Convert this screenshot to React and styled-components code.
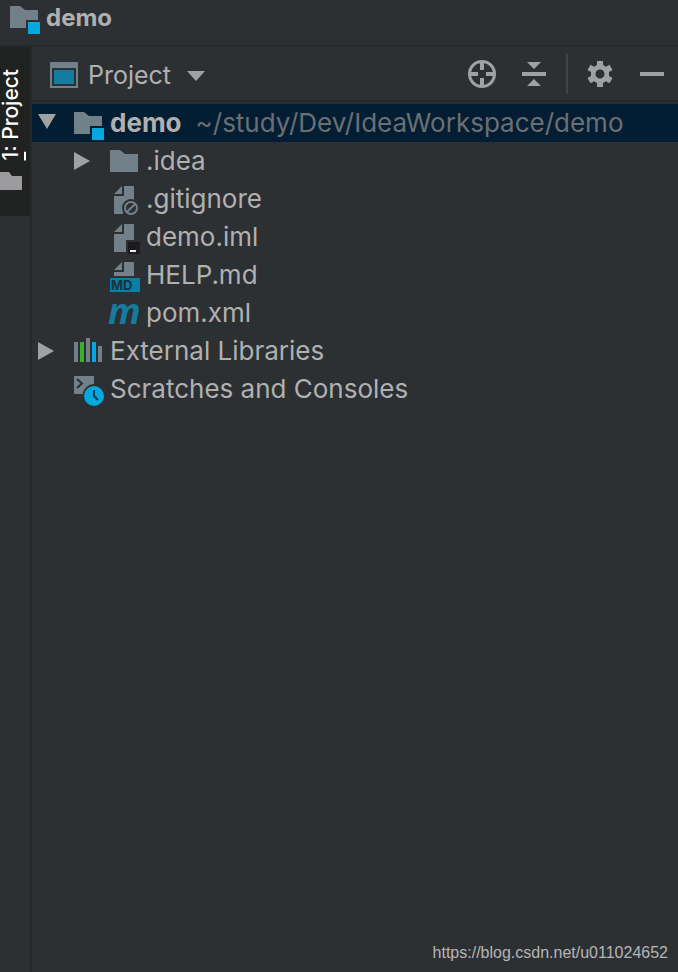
import React, { useState } from 'react';
import styled, { createGlobalStyle, ThemeProvider } from 'styled-components';

const theme = {
  background: '#2d3033',
  line: '#272828',
  selected: '#031e33',
  text: '#b0b0b1',
  muted: '#6b6f73',
  icon: '#718089',
  control: '#9fa1a3',
  blue: '#04a7de',
  teal: '#147c9f',
  green: '#3bb02a'
};

const GlobalStyle = createGlobalStyle`
  *, *::before, *::after {
    box-sizing: border-box;
  }

  body {
    margin: 0;
    background-color: ${theme.background};
  }
`;

const StyledWrapper = styled.div`
  min-height: 100vh;
  display: flex;
  flex-direction: column;
  position: relative;
  background-color: ${({ theme }) => theme.background};
  color: ${({ theme }) => theme.text};
  font-family: 'Inter', sans-serif;
  font-size: 26px;
  line-height: 32px;
`;

const StyledNavBar = styled.header`
  height: 47px;
  display: flex;
  align-items: flex-start;
  gap: 6px;
  padding: 2px 8px;
  border-bottom: 2px solid ${({ theme }) => theme.line};
  font-size: 24px;
  font-weight: 700;
`;

const StyledMain = styled.div`
  flex: 1;
  display: flex;
`;

const StyledStripe = styled.nav`
  width: 32px;
  border-right: 2px solid ${({ theme }) => theme.line};
`;

const StyledStripeButton = styled.button`
  width: 100%;
  height: 169px;
  display: flex;
  flex-direction: column;
  align-items: flex-start;
  justify-content: flex-end;
  gap: 12px;
  padding: 0 0 26px;
  border: none;
  background-color: #202121;
  color: #fff;
  font-family: inherit;
  font-size: 21px;
  font-weight: 500;
  line-height: 22px;
  cursor: pointer;
`;

const StyledStripeLabel = styled.span`
  writing-mode: vertical-rl;
  transform: rotate(180deg);
  white-space: nowrap;

  u {
    text-underline-offset: 2px;
    text-decoration-thickness: 2px;
  }
`;

const StyledPanel = styled.section`
  flex: 1;
  min-width: 0;
`;

const StyledToolbar = styled.div`
  height: 55px;
  display: flex;
  align-items: center;
  padding: 0 10px 0 16px;
  border-bottom: 2px solid ${({ theme }) => theme.line};
`;

const StyledViewButton = styled.button`
  display: flex;
  align-items: flex-end;
  gap: 8px;
  margin-right: auto;
  padding: 0;
  border: none;
  background: none;
  color: inherit;
  font: inherit;
  font-size: 25px;
  line-height: 30px;
  cursor: pointer;
`;

const StyledActions = styled.div`
  display: flex;
  align-items: center;
  gap: 20px;
`;

const StyledActionGroup = styled(StyledActions)`
  margin-left: 16px;
  padding-left: 16px;
  height: 40px;
  border-left: 2px solid #414446;
`;

const StyledIconButton = styled.button`
  width: ${({ $wide }) => ($wide ? '36px' : '32px')};
  height: 32px;
  flex-shrink: 0;
  padding: 0;
  border: none;
  background: none;
  cursor: pointer;
`;

const StyledIcon = styled.svg`
  width: 32px;
  height: 32px;
  display: block;
  flex-shrink: 0;
  overflow: visible;
`;

const StyledTree = styled.ul`
  margin: 0;
  padding: 2px 0 0;
  list-style: none;
`;

const StyledRow = styled.li`
  height: 38px;
  display: flex;
  align-items: flex-start;
  padding: 4px 0 0 ${({ $level }) => 4 + $level * 36}px;
  background-color: ${({ theme, $selected }) => ($selected ? theme.selected : 'transparent')};
  white-space: nowrap;
  cursor: default;
`;

const StyledArrowSlot = styled.span`
  width: 36px;
  flex-shrink: 0;
`;

const StyledName = styled.span`
  margin-left: 6px;
  line-height: 30px;
  font-weight: ${({ $bold }) => ($bold ? 700 : 400)};
`;

const StyledPath = styled.span`
  margin-left: 14px;
  line-height: 30px;
  color: ${({ theme }) => theme.muted};
`;

const StyledLink = styled.a`
  position: absolute;
  right: 10px;
  bottom: 8px;
  color: #b4b6b7;
  font-family: 'Liberation Sans', sans-serif;
  font-size: 16px;
  line-height: 22px;
  text-decoration: none;
`;

const Icon = ({ children }) => (
  <StyledIcon viewBox="0 0 32 32" aria-hidden="true">
    {children}
  </StyledIcon>
);

const FolderIcon = () => (
  <Icon>
    <path d="M2 4h10l5 4h13v18H2z" fill={theme.icon} />
  </Icon>
);

const ModuleIcon = () => (
  <Icon>
    <path d="M2 4h10l5 4h13v10H18v8H2z" fill={theme.icon} />
    <path d="M20 20h12v12H20z" fill={theme.blue} />
  </Icon>
);

const IgnoreIcon = () => (
  <Icon>
    <path d="M14 2v8H6z" fill={theme.icon} />
    <path d="M16 2h10v13.500a9 9 0 0 0-11 12.500v2H6V12h10z" fill={theme.icon} />
    <circle cx="23" cy="24" r="6" fill="none" stroke={theme.icon} strokeWidth="2" />
    <path d="M19 28l8-8" stroke={theme.icon} strokeWidth="2" />
  </Icon>
);

const ImlIcon = () => (
  <Icon>
    <path d="M14 2v8H6z" fill={theme.icon} />
    <path d="M16 2h10v16h-8v12H6V12h10z" fill={theme.icon} />
    <path d="M20 20h12v12H20z" fill="#1c1b1d" />
    <path d="M22 28h6v2h-6z" fill="#e8e8e8" />
  </Icon>
);

const MarkdownIcon = () => (
  <Icon>
    <path d="M14 2v8H6z" fill={theme.icon} />
    <path d="M16 2h10v14H6v-4h10z" fill={theme.icon} />
    <path d="M2 18h30v14H2z" fill="#087fa5" />
    <text x="3" y="30" fill="#19323d" fontFamily="Inter, sans-serif" fontSize="13" fontWeight="700">
      MD
    </text>
  </Icon>
);

const MavenIcon = () => (
  <Icon>
    <text
      x="0"
      y="26"
      fill={theme.teal}
      fontFamily="Open Sans, sans-serif"
      fontSize="36"
      fontWeight="700"
      fontStyle="italic"
    >
      m
    </text>
  </Icon>
);

const LibrariesIcon = () => (
  <Icon>
    <path d="M2 6h4v20H2zM14 2h4v24h-4zM26 10h4v16h-4z" fill={theme.icon} />
    <path d="M8 6h4v20H8z" fill={theme.green} />
    <path d="M20 6h4v20h-4z" fill={theme.blue} />
  </Icon>
);

const ScratchesIcon = () => (
  <Icon>
    <path d="M2 2h20v8a12 12 0 0 0-11.500 10H2z" fill={theme.icon} />
    <path d="M5 5l5 4.500-5 4.500" fill="none" stroke={theme.background} strokeWidth="2" />
    <circle cx="22" cy="22" r="10" fill={theme.blue} />
    <path d="M22 16v6l4 4" fill="none" stroke="#17384a" strokeWidth="2" />
  </Icon>
);

const ViewIcon = () => (
  <Icon>
    <path d="M2 4h28v26H2zM4 10v18h24V10z" fill={theme.icon} fillRule="evenodd" />
    <path d="M6 12h20v14H6z" fill={theme.teal} />
  </Icon>
);

const DropdownIcon = () => (
  <Icon>
    <path d="M8 13h18l-9 10z" fill={theme.control} />
  </Icon>
);

const LocateIcon = () => (
  <Icon>
    <circle cx="16" cy="16" r="12.5" fill="none" stroke={theme.control} strokeWidth="3" />
    <path d="M16 3v9M16 20v9M3 16h9M20 16h9" stroke={theme.control} strokeWidth="4" />
  </Icon>
);

const CollapseIcon = () => (
  <Icon>
    <path d="M9 4h14l-7 7zM4 14h24v4H4zM9 28h14l-7-7z" fill={theme.control} />
  </Icon>
);

const GearIcon = () => (
  <Icon>
    <path
      d="M13 3h6v4l3 1.700 3.500-2 3 5.200-3.500 2v4.200l3.500 2-3 5.200-3.500-2L19 25v4h-6v-4l-3-1.700-3.500 2-3-5.200 3.500-2v-4.200l-3.500-2 3-5.200 3.500 2L13 7zM16 11.500a4.500 4.500 0 1 0 0 9 4.500 4.500 0 0 0 0-9z"
      fill={theme.control}
      fillRule="evenodd"
    />
  </Icon>
);

const HideIcon = () => (
  <Icon>
    <path d="M4 14h24v4H4z" fill={theme.control} />
  </Icon>
);

const Arrow = ({ isOpen }) => (
  <Icon>
    <path d={isOpen ? 'M2 6h18l-9 15z' : 'M2 6v18l16-9z'} fill={theme.control} />
  </Icon>
);

const StripeFolder = styled.svg`
  width: 22px;
  height: 18px;
  display: block;
`;

const files = [
  { name: '.idea', icon: FolderIcon, level: 1, hasArrow: true },
  { name: '.gitignore', icon: IgnoreIcon, level: 1 },
  { name: 'demo.iml', icon: ImlIcon, level: 1 },
  { name: 'HELP.md', icon: MarkdownIcon, level: 1 },
  { name: 'pom.xml', icon: MavenIcon, level: 1 }
];

const roots = [
  { name: 'External Libraries', icon: LibrariesIcon, level: 0, hasArrow: true },
  { name: 'Scratches and Consoles', icon: ScratchesIcon, level: 0 }
];

const TreeRow = ({ name, icon: RowIcon, level, hasArrow, isOpen, onToggle, path }) => (
  <StyledRow $level={level} $selected={Boolean(path)}>
    {hasArrow ? (
      <StyledIconButton $wide aria-label={`Toggle ${name}`} aria-expanded={Boolean(isOpen)} onClick={onToggle}>
        <Arrow isOpen={isOpen} />
      </StyledIconButton>
    ) : (
      <StyledArrowSlot />
    )}
    <RowIcon />
    <StyledName $bold={Boolean(path)}>{name}</StyledName>
    {path && <StyledPath>{path}</StyledPath>}
  </StyledRow>
);

const App = () => {
  const [isOpen, setOpen] = useState(true);
  const visible = isOpen ? [...files, ...roots] : roots;

  return (
    <ThemeProvider theme={theme}>
      <GlobalStyle />
      <StyledWrapper>
        <StyledNavBar>
          <ModuleIcon />
          <span>demo</span>
        </StyledNavBar>
        <StyledMain>
          <StyledStripe>
            <StyledStripeButton>
              <StyledStripeLabel>
                <u>1</u>: Project
              </StyledStripeLabel>
              <StripeFolder viewBox="0 0 22 18" aria-hidden="true">
                <path d="M0 0h9l3 4h10v14H0z" fill="#9b9b9f" />
              </StripeFolder>
            </StyledStripeButton>
          </StyledStripe>
          <StyledPanel>
            <StyledToolbar>
              <StyledViewButton>
                <ViewIcon />
                <span>Project</span>
                <DropdownIcon />
              </StyledViewButton>
              <StyledActions>
                <StyledIconButton aria-label="Select opened file">
                  <LocateIcon />
                </StyledIconButton>
                <StyledIconButton aria-label="Collapse all">
                  <CollapseIcon />
                </StyledIconButton>
              </StyledActions>
              <StyledActionGroup>
                <StyledIconButton aria-label="Settings">
                  <GearIcon />
                </StyledIconButton>
                <StyledIconButton aria-label="Hide">
                  <HideIcon />
                </StyledIconButton>
              </StyledActionGroup>
            </StyledToolbar>
            <StyledTree>
              <TreeRow
                name="demo"
                icon={ModuleIcon}
                level={0}
                hasArrow
                isOpen={isOpen}
                onToggle={() => setOpen(!isOpen)}
                path="~/study/Dev/IdeaWorkspace/demo"
              />
              {visible.map((row) => (
                <TreeRow key={row.name} {...row} />
              ))}
            </StyledTree>
          </StyledPanel>
        </StyledMain>
        <StyledLink href="https://blog.csdn.net/u011024652">https://blog.csdn.net/u011024652</StyledLink>
      </StyledWrapper>
    </ThemeProvider>
  );
};

export default App;
